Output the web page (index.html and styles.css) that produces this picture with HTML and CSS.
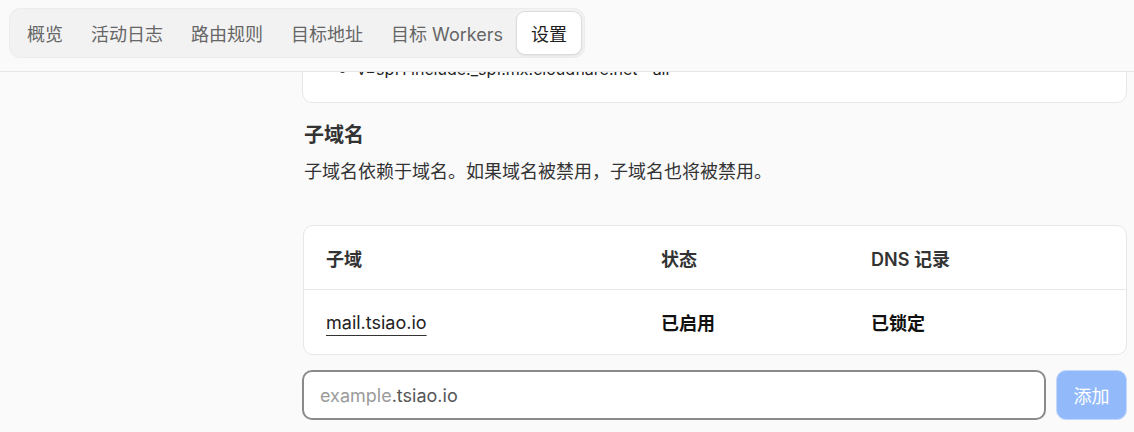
FILE: index.html
```html
<!DOCTYPE html>
<html lang="zh-CN">
	<head>
		<meta charset="utf-8" />
		<meta name="viewport" content="width=device-width, initial-scale=1" />
		<title>设置</title>
		<link rel="stylesheet" href="styles.css">
	</head>
	<body>
		<header class="topbar">
			<nav class="tabs">
				<a class="tab" href="#">概览</a>
				<a class="tab" href="#">活动日志</a>
				<a class="tab" href="#">路由规则</a>
				<a class="tab" href="#">目标地址</a>
				<a class="tab" href="#">目标 Workers</a>
				<a class="tab active" href="#">设置</a>
			</nav>
		</header>

		<main class="layout">
			<div class="sidebar"></div>
			<div class="content">
				<div class="card records">
					<ul>
						<li>v=spf1 include:_spf.mx.cloudflare.net ~all</li>
					</ul>
				</div>

				<h3 class="section-title">子域名</h3>
				<p class="section-desc">子域名依赖于域名。如果域名被禁用，子域名也将被禁用。</p>

				<div class="card table-card">
					<table class="subdomains">
						<thead>
							<tr>
								<th class="col-name">子域</th>
								<th class="col-status">状态</th>
								<th>DNS 记录</th>
							</tr>
						</thead>
						<tbody>
							<tr>
								<td><a class="domain-link" href="#">mail.tsiao.io</a></td>
								<td class="strong">已启用</td>
								<td class="strong">已锁定</td>
							</tr>
						</tbody>
					</table>
				</div>

				<form class="add-row" onsubmit="return false">
					<label class="domain-input">
						<span class="placeholder">example</span><span class="suffix">.tsiao.io</span>
					</label>
					<button class="add-btn" type="submit" disabled>添加</button>
				</form>
			</div>
		</main>
	</body>
</html>
```

FILE: styles.css
```css
html {
	font-family: "Inter", "Noto Sans CJK SC", sans-serif;
	color: #222;
}
body {
	margin: 0;
	background: #fafafa;
	overflow: hidden;
}

/* sticky tab bar */
.topbar {
	position: fixed;
	top: 0;
	left: 0;
	right: 0;
	z-index: 10;
	height: 72px;
	background: #fafafa;
	border-bottom: 1px solid #e6e6e6;
	box-sizing: border-box;
	padding: 8px 9px;
}
.tabs {
	display: inline-flex;
	padding: 3px;
	background: #f2f2f2;
	border: 1px solid #ececec;
	border-radius: 11px;
}
.tab {
	display: flex;
	align-items: center;
	height: 42px;
	padding: 0 14px;
	font-size: 18px;
	color: #666;
	text-decoration: none;
	border-radius: 8px;
}
.tab.active {
	background: #fff;
	color: #1f1f1f;
	box-shadow: 0 0 0 1px #dcdcdc, 0 1px 3px rgba(0, 0, 0, 0.14);
}

.layout {
	display: grid;
	grid-template-columns: 302px 1fr;
	padding: 34px 7px 0 0;
}

.card {
	background: #fff;
	border: 1px solid #e7e7e7;
	border-radius: 10px;
}

.records {
	padding: 22px 34px 21px;
}
.records ul {
	margin: 0;
	padding-left: 20px;
	font-size: 16px;
	line-height: 24px;
	color: #222;
}

.section-title {
	margin: 18px 0 0 2px;
	font-size: 20px;
	line-height: 28px;
	font-weight: 700;
	color: #333;
}
.section-desc {
	margin: 10px 0 0 2px;
	font-size: 18px;
	line-height: 26px;
	color: #333;
}

.table-card {
	margin: 40px 0 0 1px;
	overflow: hidden;
}
.subdomains {
	width: 100%;
	border-collapse: collapse;
	font-size: 18px;
}
.subdomains th,
.subdomains td {
	text-align: left;
	padding: 0 22px;
	height: 63px;
}
.subdomains th {
	font-weight: 600;
	color: #333;
	border-bottom: 1px solid #e7e7e7;
}
.subdomains td {
	height: 64px;
}
.col-name {
	width: 335px;
	box-sizing: border-box;
}
.col-status {
	width: 210px;
	box-sizing: border-box;
}
.domain-link {
	color: #222;
	text-decoration: underline;
	text-decoration-color: #333;
	text-underline-offset: 6px;
}
.strong {
	font-weight: 700;
	color: #111;
}

.add-row {
	display: flex;
	gap: 10px;
	margin-top: 15px;
}
.domain-input {
	flex: 1;
	display: flex;
	align-items: center;
	height: 50px;
	padding: 0 16px;
	box-sizing: border-box;
	background: #fff;
	border: 2px solid #8a8a8a;
	border-radius: 10px;
	font-size: 18px;
}
.placeholder {
	color: #9b9b9b;
}
.suffix {
	color: #555;
}
.add-btn {
	width: 71px;
	height: 50px;
	font-family: inherit;
	font-size: 18px;
	color: #fff;
	background: #92bafb;
	border: 1px solid #c3d8fb;
	border-radius: 10px;
}
```
